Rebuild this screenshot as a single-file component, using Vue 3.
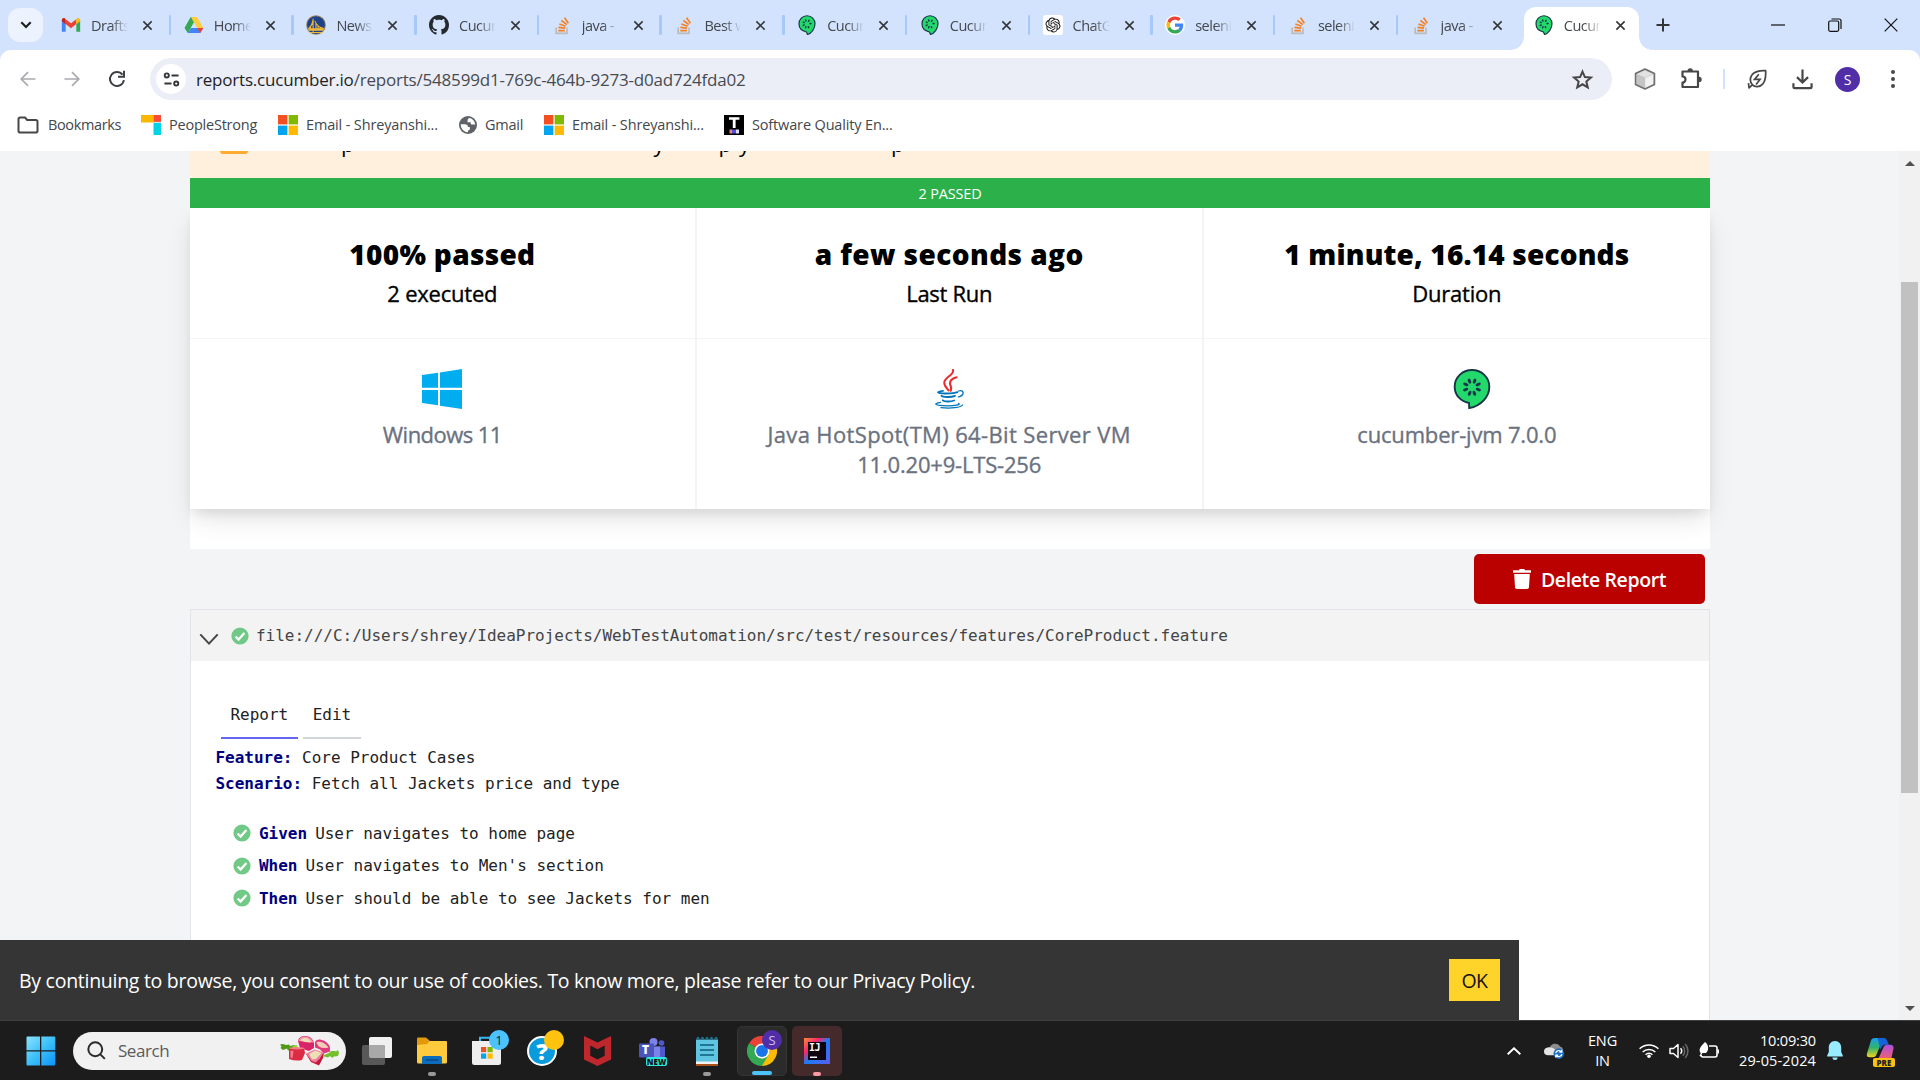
<script setup>
import { h } from 'vue'

const seeds = (cx, cy, r, rx, ry, angles) =>
  angles
    .map((a) => `<ellipse cx="${cx}" cy="${cy - r}" rx="${rx}" ry="${ry}" transform="rotate(${a} ${cx} ${cy})"/>`)
    .join('')

const glyphs = {
  gmail: ['0 0 24 24', '<path fill="#4285f4" d="M1 20h4.6V10.5L1 6.5V19z"/><path fill="#34a853" d="M18.4 20H23V6.5l-4.6 4z"/><path fill="#ea4335" d="M5.6 10.8V5l6.4 5 6.4-5v5.800L12 15.800z"/><path fill="#c5221f" d="M1 6v1.500l4.600 3.500V5L4.500 4C3 3 1 4 1 6z"/><path fill="#fbbc04" d="M18.400 5v6L23 7.500V6c0-2-2-3-3.500-2z"/>'],
  drive: ['0 0 24 24', '<path fill="#0f9d58" d="M8.300 2.500h4L5 21 .8 15.500z"/><path fill="#34a853" d="M8.300 2.500h7.400L4.600 21.500.8 15.500z"/><path fill="#ffcd40" d="M8.300 2.500h7.400l7.500 13h-7.500z"/><path fill="#4285f4" d="M8.400 15.500h14.800l-3.800 6H4.600z"/><path fill="#d3e3fd" d="M12 9.200l3.400 6.300H8.500z"/><path fill="#ea4335" d="M15.700 15.500h7.500l-3.800 6z"/>'],
  warriors: ['0 0 24 24', '<circle cx="12" cy="12" r="11.800" fill="#8f7f5a"/><circle cx="12" cy="12" r="10.600" fill="#1d428a"/><path fill="#f0b93a" d="M2 16h20l-1.500 3h-17z"/><path fill="none" stroke="#f0b93a" stroke-width="1.300" d="M4.500 21h15M8.500 4.500V20M10.500 7c2 5 5 8 10.500 9M8 7c-.500 4-2 7-5 9M12 10v7M14.500 13V17M17 15v2M5.500 13v4"/>'],
  github: ['0 0 16 16', '<path fill="#24292f" d="M8 0C3.580 0 0 3.580 0 8c0 3.540 2.290 6.530 5.470 7.590.4.070.550-.170.550-.380 0-.190-.010-.820-.010-1.490-2.010.370-2.530-.490-2.690-.940-.090-.230-.480-.940-.820-1.130-.280-.150-.680-.520-.010-.530.630-.010 1.080.580 1.230.820.720 1.210 1.870.870 2.330.660.070-.520.280-.870.510-1.070-1.780-.2-3.640-.890-3.640-3.950 0-.870.310-1.590.820-2.150-.080-.2-.360-1.020.080-2.120 0 0 .670-.210 2.200.820.640-.180 1.320-.270 2-.270s1.360.090 2 .270c1.530-1.040 2.200-.820 2.200-.820.440 1.100.160 1.920.080 2.120.510.560.820 1.270.820 2.150 0 3.070-1.870 3.750-3.650 3.950.290.250.540.730.540 1.480 0 1.070-.010 1.930-.010 2.200 0 .210.150.460.550.380A8.010 8.010 0 0 0 16 8c0-4.420-3.580-8-8-8z"/>'],
  so: ['0 0 24 24', '<path fill="none" stroke="#bcbbbb" stroke-width="2" d="M5 15v7h13v-7"/><path fill="none" stroke="#f48024" stroke-width="2" d="M7.500 18.700h8M7.700 14.800l8 1M8.800 10.700l7.500 2.700M11.300 6.600l6.500 4.900M15 3.200l4.700 6.800"/>'],
  cuke: ['0 0 24 24', '<path fill="#23d96c" stroke="#173647" stroke-width="1.100" d="M12 .6c5.500 0 9.900 4.400 9.900 10 0 6-4.700 11.500-11.500 12.800l-.1-3C5.600 19.500 2.100 15.700 2.100 10.600 2.100 5 6.500.6 12 .6z"/><g fill="#173647">' + seeds(12, 10.9, 3.9, 0.9, 1.6, [-160, -200, -22, 22, -65, 65, -112, 112]) + '</g>'],
  cukeTab: ['0 0 24 24', '<path fill="#23d96c" stroke="#173647" stroke-width="1.400" d="M12 .9c5.500 0 9.600 4.300 9.600 9.700 0 6-4.400 11.300-9 12.800l-1.200-3C5.800 19.300 2.400 15.500 2.400 10.600 2.400 5.200 6.500.9 12 .9z"/><g fill="#173647">' + seeds(12, 10.7, 4.3, 0.95, 1.5, [-160, -205, -20, 30, -65, -112, 85]) + '</g>'],
  openai: ['-4 -4 32 32', '<rect x="-4" y="-4" width="32" height="32" rx="5" fill="#fff"/><path fill="#111" d="M22.2819 9.8211a5.9847 5.9847 0 0 0-.5157-4.9108 6.0462 6.0462 0 0 0-6.5098-2.9A6.0651 6.0651 0 0 0 4.9807 4.1818a5.9847 5.9847 0 0 0-3.9977 2.9 6.0462 6.0462 0 0 0 .7427 7.0966 5.98 5.98 0 0 0 .511 4.9107 6.051 6.051 0 0 0 6.5146 2.9001A5.9847 5.9847 0 0 0 13.2599 24a6.0557 6.0557 0 0 0 5.7718-4.2058 5.9894 5.9894 0 0 0 3.9977-2.9001 6.0557 6.0557 0 0 0-.7475-7.0729zm-9.022 12.6081a4.4755 4.4755 0 0 1-2.8764-1.0408l.1419-.0804 4.7783-2.7582a.7948.7948 0 0 0 .3927-.6813v-6.7369l2.02 1.1686a.071.071 0 0 1 .038.052v5.5826a4.504 4.504 0 0 1-4.4945 4.4944zm-9.6607-4.1254a4.4708 4.4708 0 0 1-.5346-3.0137l.142.0852 4.783 2.7582a.7712.7712 0 0 0 .7806 0l5.8428-3.3685v2.3324a.0804.0804 0 0 1-.0332.0615L9.74 19.9502a4.4992 4.4992 0 0 1-6.1408-1.6464zM2.3408 7.8956a4.485 4.485 0 0 1 2.3655-1.9728V11.6a.7664.7664 0 0 0 .3879.6765l5.8144 3.3543-2.0201 1.1685a.0757.0757 0 0 1-.071 0l-4.8303-2.7865A4.504 4.504 0 0 1 2.3408 7.872zm16.5963 3.8558L13.1038 8.364 15.1192 7.2a.0757.0757 0 0 1 .071 0l4.8303 2.7913a4.4944 4.4944 0 0 1-.6765 8.1042v-5.6772a.79.79 0 0 0-.407-.667zm2.0107-3.0231l-.142-.0852-4.7735-2.7818a.7759.7759 0 0 0-.7854 0L9.409 9.2297V6.8974a.0662.0662 0 0 1 .0284-.0615l4.8303-2.7866a4.4992 4.4992 0 0 1 6.6802 4.66zM8.3065 12.863l-2.02-1.1638a.0804.0804 0 0 1-.038-.0567V6.0742a4.4992 4.4992 0 0 1 7.3757-3.4537l-.142.0805L8.704 5.459a.7948.7948 0 0 0-.3927.6813zm1.0976-2.3654l2.602-1.4998 2.6069 1.4998v2.9994l-2.5974 1.4997-2.6067-1.4997Z"/>'],
  google: ['-4 -4 56 56', '<circle cx="24" cy="24" r="28" fill="#fff"/><path fill="#ea4335" d="M24 9.500c3.540 0 6.710 1.220 9.210 3.600l6.850-6.850C35.900 2.380 30.470 0 24 0 14.620 0 6.510 5.380 2.560 13.220l7.980 6.190C12.430 13.720 17.740 9.500 24 9.500z"/><path fill="#4285f4" d="M46.980 24.550c0-1.570-.150-3.090-.380-4.550H24v9.020h12.940c-.580 2.960-2.260 5.480-4.780 7.180l7.730 6c4.510-4.180 7.090-10.360 7.090-17.650z"/><path fill="#fbbc05" d="M10.530 28.590c-.480-1.450-.760-2.990-.760-4.590s.270-3.140.760-4.590l-7.980-6.190C.920 16.460 0 20.120 0 24c0 3.880.920 7.540 2.560 10.780l7.970-6.190z"/><path fill="#34a853" d="M24 48c6.480 0 11.930-2.130 15.890-5.810l-7.730-6c-2.150 1.450-4.920 2.300-8.160 2.300-6.260 0-11.570-4.220-13.470-9.910l-7.980 6.190C6.510 42.620 14.620 48 24 48z"/>'],
  close: ['0 0 12 12', '<path fill="none" stroke="#333639" stroke-width="1.700" d="M1.500 1.500l9 9M10.500 1.500l-9 9"/>'],
  folder: ['0 0 22 18', '<path fill="none" stroke="#474747" stroke-width="2" stroke-linejoin="round" d="M1.500 14.700V3.300C1.500 2.200 2 1.500 3.200 1.500H8l2.200 2.500h8.600c1.200 0 1.700.700 1.700 1.700v9c0 1-.500 1.800-1.700 1.800H3.200c-1.200 0-1.700-.700-1.700-1.800z"/>'],
  ps: ['0 0 20 20', '<path fill="#fbb800" d="M0 0h12.500v7.500H0z"/><path fill="#fb4b35" d="M12.500 0H20v7.500h-7.500z"/><path fill="#00d3e6" d="M12.500 7.500H20V20h-7.500z"/><path fill="#fff" opacity=".6" d="M12.500 6.800H20v1.200h-7.500z"/>'],
  ms: ['0 0 20 20', '<path fill="#f25022" d="M0 0h9.400v9.400H0z"/><path fill="#7fba00" d="M10.600 0H20v9.400h-9.400z"/><path fill="#00a4ef" d="M0 10.600h9.400V20H0z"/><path fill="#ffb900" d="M10.600 10.600H20V20h-9.400z"/>'],
  globe: ['0 0 20 20', '<circle cx="10" cy="10" r="10" fill="#5f6368"/><path fill="#fff" d="M11.500 2.300c3.500.700 6.300 3.700 6.500 7.200h-3.500c-1 0-1.500-.500-1.500-1.500V7H9.500V5c0-1.200.700-2 2-2.700zM2 9.200h4.500c2 0 3.500 1 3.500 3h2v2.300c0 1.200-.800 1.500-2 1.500v2C5.500 18.200 1.700 14 2 9.200z"/>'],
  tic: ['0 0 20 20', '<path fill="#000" d="M0 0h20v20H0z"/><path fill="#fff" d="M5 2.200h10.400v2.600h-3.800V13H8.800V4.800H5z"/><path fill="#d98d7d" d="M5.500 14.500h2.500v4H5.500z"/><path fill="#5a4bd8" d="M8 14.500h4v4H8z"/><path fill="#dcdcff" d="M12 14.500h3v4h-3z"/>'],
  back: ['0 0 16 16', '<path fill="none" stroke="#a9abae" stroke-width="1.700" d="M15.500 8H1.500M8 1.200L1.200 8 8 14.800"/>'],
  forward: ['0 0 16 16', '<path fill="none" stroke="#a9abae" stroke-width="1.700" d="M.5 8h14M8 1.200L14.800 8 8 14.800"/>'],
  reload: ['0 0 18 18', '<path fill="none" stroke="#3c4043" stroke-width="2" d="M15.900 10.200A7 7 0 1 1 14.500 4.700"/><path fill="none" stroke="#3c4043" stroke-width="2" d="M16 .8v6h-6"/>'],
  tune: ['0 0 18 16', '<g fill="none" stroke="#33363a" stroke-width="2"><circle cx="4" cy="3.700" r="2.200"/><path d="M9 3.700h7.500M1.500 12.300H9"/><circle cx="14" cy="12.300" r="2.200"/></g>'],
  star: ['0 0 24 24', '<path fill="none" stroke="#474747" stroke-width="2.100" d="M12 3.700l2.500 5.800 6.300.5-4.800 4.100 1.500 6.200-5.500-3.300-5.500 3.300L8 14.100 3.200 10l6.300-.5z"/>'],
  box: ['0 0 22 22', '<path fill="#c4c4c4" stroke="#6f6f6f" stroke-width="1.500" stroke-linejoin="round" d="M11 1l9.500 4.500v11L11 21l-9.500-4.500v-11z"/><path fill="#e2e2e2" d="M11 2.500l7.800 3.600L11 9.500 3.200 6.100z"/><path fill="#f1f1f1" d="M11.200 10l7.800-3.500v9.400l-7.800 3.800z"/>'],
  puzzle: ['0 0 24 24', '<path fill="none" stroke="#474747" stroke-width="2.200" stroke-linejoin="round" d="M3.500 4.500h15.500v15.500H3.500v-4.500a3 3 0 0 0 0-6z"/><path fill="#474747" d="M8.500 4a2.700 2.700 0 0 1 5.400 0zM20 9.700a2.700 2.700 0 0 1 0 5.400z"/>'],
  leaf: ['0 0 22 22', '<g fill="none" stroke="#474747" stroke-width="1.900"><path stroke-linejoin="round" d="M20.500 1.800c.300 6-.1 11-3 14.500-3.500 4-9 3.800-11.500 1.200-3-3-3.200-8-.2-11.500C9 2.500 14.500 1.500 20.500 1.800zM6.200 17.300L2.300 20.800 1.600 15.500"/><path d="M13 5.800L8.300 11.500h6L10 17"/></g>'],
  download: ['0 0 22 22', '<path fill="none" stroke="#474747" stroke-width="2.300" d="M11 .5v13M5.200 8.500l5.800 5.700 5.800-5.700M1.500 15v3.500c0 1 .5 1.500 1.500 1.500h16c1 0 1.500-.5 1.500-1.500V15"/>'],
  dots: ['0 0 4 18', '<g fill="#474747"><circle cx="2" cy="2" r="2"/><circle cx="2" cy="9" r="2"/><circle cx="2" cy="16" r="2"/></g>'],
  win10: ['0 0 40 40', '<path fill="#00adef" d="M0 6l16-2.300v15.100H0zM18 3.400L40 0v18.800H18zM0 21h16v15.200L0 34zM18 21h22v19l-22-3.200z"/>'],
  java: ['0 0 30 40', '<g fill="none" stroke-linecap="round"><path stroke="#ea2d2e" stroke-width="2" d="M19 .8c1.600 5-8 7.200-8.700 12.400-.4 3.200 2.600 6 4.200 8.300"/><path stroke="#ea2d2e" stroke-width="2.200" d="M22.500 8.300c-4 1.200-6.700 3.300-6.500 6.200.2 2.200 2.200 3.700.8 7.200"/><g stroke="#0074bd" stroke-width="1.300"><path d="M9 21.800c-3 .4-5 1-5 1.600 1.500 1.700 15 1.300 19.500-.3M7.500 26.700c1 1.700 10 1.700 13.500.2M8.800 31.300c1.500 1.500 8 1.600 11.300.2" stroke-width="1.800"/><path d="M24.500 22c3.500-1 5 .500 4.500 2.500-.4 1.800-2.500 3-4.600 3.400M6.500 33.300c-8 1.500-6 3.300 7 3.500 6.500.1 14-1 11-2.300M28.500 36c-1.500 2.500-12 3.800-21.500 2.600"/></g></g>'],
  trash: ['0 0 18 20', '<path fill="#fff" d="M0 1.300h6L6.700 0h4.600l.7 1.300h6v2.500H0zM1.200 5h15.600l-.8 13.300c0 1-.9 1.700-2 1.700H4c-1.100 0-2-.7-2-1.700z"/>'],
  chev: ['0 0 20 14', '<path fill="none" stroke="#474747" stroke-width="2" d="M1.300 1.500L10 11.500l8.700-10"/>'],
  check: ['0 0 18 18', '<circle cx="9" cy="9" r="8.600" fill="#70c986"/><path fill="none" stroke="#fff" stroke-width="2.300" d="M4.600 9.500l3 3 5.800-6.500"/>'],
  win11: ['0 0 30 30', '<defs><linearGradient id="w11" x1="0" y1="0" x2="1" y2="1"><stop offset="0" stop-color="#8be2fd"/><stop offset=".5" stop-color="#3cc0f9"/><stop offset="1" stop-color="#0a93fa"/></linearGradient></defs><path fill="url(#w11)" d="M1.500.5H14v13.800H.5V1.500q0-1 1-1zM15.300.5h13q1 0 1 1v12.800h-14zM.5 15.600H14v13.900H1.500q-1 0-1-1zM15.300 15.600h14v12.900q0 1-1 1h-13z"/>'],
  glass: ['0 0 20 20', '<g fill="none" stroke="#2b2b2b" stroke-width="2.100"><circle cx="8.700" cy="8.700" r="7.300"/><path d="M13.800 13.800l5 5"/></g>'],
  rhubarb: ['0 0 60 30', '<path fill="#4f9a14" d="M0 8.500l3-.5 3 1 3-.5 1 1.500 4-1 3 2-2 4-5-1-2 .5-1-2-4 1.500-2.500-2 1-1.500z"/><path fill="#8fd63a" d="M12 10l5-1 1 5-4-1z"/><path fill="#74bf2b" d="M44 19l5-2 2-2h4l1 .500 2-1.500 1 3-1 3-4 .500-2 1.500-2-2-2 1.500-4-1z"/><path fill="#d9246a" d="M18 5Q19 0 25 0q7 0 9 7v5l-5 3-9-3z"/><path fill="#f29ab0" d="M18.500 5Q20 .500 25 .600q6 .400 8.500 6z"/><path fill="#ece0b4" d="M20.500 4.500q2-3 5-2.500 4 .500 5.500 4.500-5 .500-10.500-2z"/><path fill="#e03a7c" d="M35 6q1-3 5-2.500 8 1.500 10 8v4l-6 2-4-4-5-2z"/><path fill="#f2cdb8" d="M36.500 6q7-1.500 12 5.500-6 1.500-9.500-1-2.500-2-2.500-4.500z"/><path fill="#dc2b45" d="M9 12q7 2 15 0l1 5-3 7q-6 1.500-13-1z"/><path fill="#f57f88" d="M9 12.500q0-1.500 7-1.500t9 1.500q-8 2-16 0zM10.500 14.500l3 .500-1 7-2-.500z"/><path fill="#c41836" d="M26 18l5 8 8 3.500L43 22l1-5-9 3z"/><path fill="#f07ca0" d="M26 17.500l9-4 8.500 3-4 6.500-4 3.500-4-1.500z"/><path fill="#ece0b4" d="M29 18l6.500-3.500 6 2.500-5.500 6-4 .500z"/>'],
  taskview: ['0 0 30 28', '<rect x="7" y="0" width="23" height="21" rx="2" fill="#f0f0f0"/><rect x="0" y="8" width="23" height="20" rx="2" fill="#5c5c5c" fill-opacity=".95"/><path fill="#a9a9a9" d="M7 8h14a2 2 0 0 1 2 2v11H9a2 2 0 0 1-2-2z"/>'],
  explorer: ['0 0 30 28', '<path fill="#e29a08" d="M0 1.500Q0 .5 1 .5h8L13 4v5H0z"/><path fill="#ffcb3d" d="M0 8l10-1 3-3h16q1 0 1 1v20q0 1.500-1.500 1.500h-27Q0 26.500 0 25z"/><path fill="#0d6dbd" d="M5 27v-6q0-2 2-2h16q2 0 2 2v6z"/><path stroke="#0a3d78" stroke-width="1.200" d="M8.500 23h13"/>'],
  store: ['0 0 30 30', '<path fill="none" stroke="#38b6f1" stroke-width="2" d="M8 6V1.800h13V6"/><path fill="#eee" d="M0 5h29v21.500q0 2.500-2.500 2.500h-24Q0 29 0 26.500z"/><path fill="#f25022" d="M9 11h5.200v5.200H9z"/><path fill="#7fba00" d="M15.500 11h5.200v5.200h-5.200z"/><path fill="#00a4ef" d="M9 17.500h5.200v5.200H9z"/><path fill="#ffb900" d="M15.500 17.500h5.200v5.200h-5.200z"/>'],
  mcafee: ['0 0 27 30', '<path fill="#c0272d" d="M0 0l13.500 6.500L27 0v23.500L13.500 30 0 23.500z"/><path fill="#1c1c1c" d="M6.300 9.500l7.200 3.700 7.200-3.700v10.200l-7.200 3.700-7.200-3.700z"/>'],
  teams: ['0 0 28 22', '<circle cx="14.500" cy="4" r="4" fill="#7b83eb"/><circle cx="22.500" cy="5" r="2.800" fill="#5059c9"/><path fill="#5059c9" d="M17 8.500h9v9q0 3-4 3h-5z"/><path fill="#7b83eb" d="M9 8.500h12V20H9z"/><rect y="5.500" width="15" height="14" rx="1" fill="#4b53bc"/>'],
  notepad: ['0 0 22 30', '<path fill="#a9521c" d="M0 25h22v5H0z"/><path fill="#f3f3f3" d="M0 24h22v4H0z"/><path fill="#5fc5e0" d="M0 3.500h22v22H0z"/><g fill="#1b6f8c"><circle cx="2" cy="2.200" r="1.500"/><circle cx="6.500" cy="2.200" r="1.500"/><circle cx="11" cy="2.200" r="1.500"/><circle cx="15.500" cy="2.200" r="1.500"/><circle cx="20" cy="2.200" r="1.500"/></g><path stroke="#0d5e7a" stroke-width="1.700" d="M4 9h14M4 14h14M4 19h14"/>'],
  chrome: ['0 0 48 48', '<path fill="#ea4335" d="M24 24L3.200 12A24 24 0 0 1 44.800 12z"/><path fill="#fbbc04" d="M24 24l20.800-12A24 24 0 0 1 24 48z"/><path fill="#34a853" d="M24 24v24A24 24 0 0 1 3.200 12z"/><path fill="#ea4335" d="M24 12h20.800L34.400 30z"/><path fill="#fbbc04" d="M34.400 30L24 48V24L44.800 12.100z"/><path fill="#34a853" d="M13.600 30L3.200 12 24 36l10.400-6L24 48z"/><circle cx="24" cy="24" r="12" fill="#fff"/><circle cx="24" cy="24" r="9.500" fill="#1a73e8"/>'],
  intellij: ['0 0 26 26', '<defs><linearGradient id="ij" x1="0" y1="0" x2="1" y2="1"><stop offset="0" stop-color="#fd8a3c"/><stop offset=".3" stop-color="#f8256c"/><stop offset=".5" stop-color="#1a7cf5"/><stop offset="1" stop-color="#5a5cf0"/></linearGradient></defs><rect width="26" height="26" fill="url(#ij)"/><rect x="4" y="4" width="18" height="18" fill="#0d0410"/><path fill="#fff" d="M6 18.500h7V20H6z"/>'],
  up: ['0 0 14 8', '<path fill="none" stroke="#fff" stroke-width="1.900" d="M.7 7.300L7 1.300l6.300 6"/>'],
  cloud: ['0 0 22 18', '<path fill="#8c8c8c" d="M6 6a6 6 0 0 1 11-1q3 0 3 5l-9 3z"/><path fill="#e4e4e4" d="M4.500 14Q0 14 0 10t5-4.500q6 0 7 4l2 4.500z"/><circle cx="15.500" cy="12.300" r="5.600" fill="#1d6fc2"/><path fill="none" stroke="#fff" stroke-width="1.300" d="M12.300 11.800a3.300 3.300 0 0 1 6-1.300M18.700 12.800a3.300 3.300 0 0 1-6 1.300M18.600 8.300v2.500h-2.400M12.400 16.300v-2.500h2.400"/>'],
  wifi: ['0 0 20 15', '<g fill="none" stroke="#fff" stroke-width="1.500"><path d="M.6 5.800a13.300 13.300 0 0 1 18.800 0M3.700 9a8.900 8.900 0 0 1 12.600 0M6.600 11.700a4.800 4.800 0 0 1 6.800 0"/></g><circle cx="10" cy="13.200" r="1.800" fill="#fff"/>'],
  volume: ['0 0 20 18', '<g fill="none" stroke-width="1.500"><path stroke="#fff" stroke-linejoin="round" d="M1 6.500h3.500L9 2.500v13l-4.500-4H1z"/><path stroke="#fff" d="M11.500 6.300a4 4 0 0 1 0 5.400"/><path stroke="#666" d="M13.800 4.200a7 7 0 0 1 0 9.600M16.200 2a10.300 10.300 0 0 1 0 14"/></g>'],
  battery: ['0 0 20 17', '<path fill="none" stroke="#fff" stroke-width="1.600" d="M10 4h6q2 0 2 2v7q0 2-2 2H4q-2 0-2-2"/><path fill="#fff" d="M18.500 7.500H20v4h-1.500zM6 0c4 3 4 8 1 11H1.500C-1 7 2 4 6 0z"/><path stroke="#fff" stroke-width="1.300" d="M4.500 8L1 14"/>'],
  bell: ['0 0 16 19', '<path fill="#99ebff" d="M8 0c4 0 6.200 3 6.200 6.500V11l1.600 3.600v.9H.2v-.9L1.800 11V6.500C1.800 3 4 0 8 0zM5.300 16.500h5.400Q10.500 19 8 19t-2.700-2.500z"/>'],
  copilot: ['0 0 30 26', '<defs><linearGradient id="c1" x1="0" y1="0" x2="0" y2="1"><stop offset="0" stop-color="#1a9df0"/><stop offset=".5" stop-color="#2fb36b"/><stop offset="1" stop-color="#f5d21b"/></linearGradient><linearGradient id="c2" x1="0" y1="0" x2="0" y2="1"><stop offset="0" stop-color="#a84fe0"/><stop offset="1" stop-color="#f2626e"/></linearGradient></defs><path fill="url(#c1)" d="M5 3q1-3 4-3h9l-7 17q-1 3-4 3H4q-4 0-3-4z"/><path fill="#1464d8" d="M12 0h7q2 0 3 3l1.500 4H19q-2 0-3 3l-1 2z"/><path fill="url(#c2)" d="M18 10q1-3 4-3h3q4 0 3.500 4L26 22H10q3 0 4-3z"/>'],
  minimise: ['0 0 14 14', '<path stroke="#111" stroke-width="1.200" d="M0 7h14"/>'],
  restore: ['0 0 14 14', '<g fill="none" stroke="#111" stroke-width="1.200"><rect x=".7" y="3" width="10" height="10.300" rx="1.500"/><path d="M3.500 1h7.500q2 0 2 2v8"/></g>'],
  closeWin: ['0 0 14 14', '<path stroke="#111" stroke-width="1.200" d="M.7.7l12.600 12.600M13.300.7L.7 13.300"/>'],
  plus: ['0 0 14 14', '<path stroke="#333639" stroke-width="2" d="M7 .5v13M.5 7h13"/>'],
  down: ['0 0 12 8', '<path fill="none" stroke="#1f1f1f" stroke-width="2.200" d="M1.300 1.300L6 6l4.700-4.700"/>'],
}

const Glyph = (p) =>
  h('svg', { class: 'glyph', viewBox: glyphs[p.n][0], width: p.w, height: p.h ?? p.w, preserveAspectRatio: 'none', innerHTML: glyphs[p.n][1] })
Glyph.props = ['n', 'w', 'h']

const tabs = [
  ['gmail', 'Drafts'], ['drive', 'Home -'], ['warriors', 'News |'], ['github', 'Cucum'], ['so', 'java - H'], ['so', 'Best w'],
  ['cukeTab', 'Cucum'], ['cukeTab', 'Cucum'], ['openai', 'ChatG'], ['google', 'seleni'], ['so', 'seleni'], ['so', 'java - H'], ['cukeTab', 'Cucum'],
]
const marks = [
  ['folder', 22, 18, 'Bookmarks', 'm0'], ['ps', 20, 20, 'PeopleStrong', 'm1'], ['ms', 20, 20, 'Email - Shreyanshi...', 'm2'],
  ['globe', 18, 18, 'Gmail', 'm3'], ['ms', 20, 20, 'Email - Shreyanshi...', 'm4'], ['tic', 20, 20, 'Software Quality En...', 'm5'],
]
const steps = [
  ['Given', 'User navigates to home page'],
  ['When', "User navigates to Men's section"],
  ['Then', 'User should be able to see Jackets for men'],
]
</script>

<template>
  <div class="screen">
    <header class="strip">
      <button class="tabsearch"><Glyph n="down" w="12" h="8" /></button>
      <div v-for="(t, i) in tabs" :key="i" class="tab" :class="{ active: i === 12, nosep: i >= 11 }">
        <Glyph :n="t[0]" w="20" />
        <span class="tabname">{{ t[1] }}</span>
        <Glyph n="close" w="11" />
      </div>
      <Glyph class="plus" n="plus" w="14" />
      <div class="winbtns">
        <Glyph n="minimise" w="14" /><Glyph n="restore" w="14" /><Glyph n="closeWin" w="14" />
      </div>
    </header>

    <div class="chrome">
      <div class="toolbar">
        <div class="nav"><Glyph n="back" w="16" /><Glyph n="forward" w="16" /><Glyph n="reload" w="18" /></div>
        <div class="omni">
          <i class="site"><Glyph n="tune" w="17" h="15" /></i>
          <span class="url"><b>reports.cucumber.io</b>/reports/548599d1-769c-464b-9273-d0ad724fda02</span>
          <Glyph n="star" w="23" />
        </div>
        <div class="ext">
          <Glyph n="box" w="22" /><Glyph n="puzzle" w="24" /><i class="vsep" /><Glyph n="leaf" w="20" /><Glyph n="download" w="21" />
          <i class="avatar">S</i><Glyph n="dots" w="4" h="18" />
        </div>
      </div>
      <div class="marks">
        <div v-for="m in marks" :key="m[4]" class="mark" :class="m[4]"><Glyph :n="m[0]" :w="m[1]" :h="m[2]" /><span>{{ m[3] }}</span></div>
      </div>
    </div>

    <div class="viewport">
      <main class="page">
        <section class="summary">
          <div class="banner">
            <i class="amber" />
            <div class="tails"><span>p</span><span>y</span><span>p</span><span>y</span><span>p</span></div>
          </div>
          <div class="passbar"><span class="pass">2 PASSED</span></div>
          <div class="card">
            <div class="cell"><strong><span class="h1">100% passed</span></strong><p><span class="s1">2 executed</span></p></div>
            <div class="cell"><strong><span class="h2">a few seconds ago</span></strong><p><span class="s2">Last Run</span></p></div>
            <div class="cell"><strong><span class="h3">1 minute, 16.14 seconds</span></strong><p><span class="s3">Duration</span></p></div>
            <div class="cell env"><Glyph n="win10" w="40" /><p><span class="g1">Windows 11</span></p></div>
            <div class="cell env"><Glyph n="java" w="30" h="40" /><p><span class="g2">Java HotSpot(TM) 64-Bit Server VM</span><br><span class="g22">11.0.20+9-LTS-256</span></p></div>
            <div class="cell env"><Glyph class="cukebig" n="cuke" w="42" h="40" /><p><span class="g3">cucumber-jvm 7.0.0</span></p></div>
          </div>
        </section>
        <div class="actions"><button class="del"><Glyph n="trash" w="18" h="20" /><span>Delete Report</span></button></div>
        <section class="feature">
          <div class="fhead"><Glyph class="chev" n="chev" w="20" h="13" /><Glyph n="check" w="18" /><span class="path">file:///C:/Users/shrey/IdeaProjects/WebTestAutomation/src/test/resources/features/CoreProduct.feature</span></div>
          <nav class="ftabs"><span class="on">Report</span><span>Edit</span></nav>
          <div class="gherkin"><div><b>Feature:</b> Core Product Cases</div><div><b>Scenario:</b> Fetch all Jackets price and type</div></div>
          <div class="steps"><div v-for="s in steps" :key="s[0]"><Glyph n="check" w="18" /><b>{{ s[0] }}</b>{{ s[1] }}</div></div>
        </section>
      </main>
      <aside class="scroll"><i class="arr up" /><i class="thumb" /><i class="arr dn" /></aside>
      <div class="cookie"><span class="ck">By continuing to browse, you consent to our use of cookies. To know more, please refer to our Privacy Policy.</span><button class="ok"><span>OK</span></button></div>
    </div>

    <footer class="taskbar">
      <div class="slot s-start"><Glyph n="win11" w="30" /></div>
      <div class="search"><Glyph n="glass" w="19" /><span>Search</span><Glyph n="rhubarb" w="60" h="30" /></div>
      <div class="slot"><Glyph n="taskview" w="30" h="28" /></div>
      <div class="slot run"><Glyph n="explorer" w="30" h="28" /></div>
      <div class="slot"><Glyph n="store" w="30" /><i class="badge blue">1</i></div>
      <div class="slot"><i class="help">?</i><i class="badge amberdot" /></div>
      <div class="slot"><Glyph n="mcafee" w="27" h="30" /></div>
      <div class="slot"><Glyph class="tm" n="teams" w="28" h="22" /><i class="tt">T</i><i class="new">NEW</i></div>
      <div class="slot run"><Glyph n="notepad" w="22" h="30" /></div>
      <div class="slot lit"><Glyph n="chrome" w="30" /><i class="badge violet">S</i></div>
      <div class="slot pink"><Glyph n="intellij" w="26" /><i class="ij">IJ</i></div>
      <div class="tray">
        <Glyph n="up" w="14" h="8" /><Glyph class="onedrive" n="cloud" w="21" h="17" />
        <div class="lang"><span class="eng">ENG</span><span>IN</span></div>
        <div class="quick"><Glyph n="wifi" w="20" h="15" /><Glyph n="volume" w="20" h="18" /><Glyph n="battery" w="20" h="17" /></div>
        <div class="clock"><span class="time">10:09:30</span><span class="date">29-05-2024</span></div>
        <Glyph n="bell" w="16" h="19" />
        <div class="cop"><Glyph n="copilot" w="29" h="25" /><i>PRE</i></div>
      </div>
    </footer>
  </div>
</template>

<style>
body { margin: 0; overflow: hidden; }
</style>

<style scoped>
* { box-sizing: border-box; }
i { font-style: normal; display: block; }
p { margin: 0; }
button { border: 0; padding: 0; font: inherit; }
.glyph { display: block; flex: none; }
.screen { width: 1920px; height: 1080px; display: flex; flex-direction: column; overflow: hidden; background: #d3e3fd; font-family: "Open Sans", "Noto Sans", sans-serif; }

.strip { height: 50px; flex: none; display: flex; align-items: center; padding-left: 8px; }
.tabsearch { width: 35px; height: 34px; border-radius: 12px; background: #edf3fe; display: flex; align-items: center; justify-content: center; margin-right: 4.500px; flex: none; }
.tab { width: 122.700px; height: 50px; flex: none; display: flex; align-items: center; padding-left: 13.500px; position: relative; }
.tab::after { content: ""; position: absolute; right: -1px; top: 15px; width: 2.500px; height: 20px; background: #a8c7fa; border-radius: 1px; }
.tab.nosep::after { display: none; }
.tabname { width: 37px; margin: 2px 14px 0 10px; overflow: hidden; white-space: nowrap; font-size: 14.500px; letter-spacing: -.5px; line-height: 22px; color: #44474c; -webkit-mask-image: linear-gradient(90deg, #000 55%, transparent); mask-image: linear-gradient(90deg, #000 55%, transparent); }
.tab.active { width: 115px; margin-left: 4px; padding-left: 10px; height: 43px; margin-top: 7px; padding-bottom: 7px; background: #fff; border-radius: 12px 12px 0 0; }
.tab.active::before { content: ""; position: absolute; left: -15px; right: -15px; bottom: 0; height: 13px; background: radial-gradient(circle at 2px 0, transparent 12.500px, #fff 13px) left / 15px 13px no-repeat, radial-gradient(circle at 13px 0, transparent 12.500px, #fff 13px) right / 15px 13px no-repeat; }
.plus { margin-left: 17px; }
.winbtns { margin-left: auto; display: flex; gap: 42.500px; padding-right: 22px; }

.chrome { height: 101px; flex: none; background: #fff; border-radius: 11px 11px 0 0; }
.toolbar { height: 58px; display: flex; align-items: center; }
.nav { width: 150px; display: flex; align-items: center; padding-left: 20px; gap: 28px; flex: none; }
.omni { width: 1462px; height: 42px; border-radius: 21px; background: #ebeef7; display: flex; align-items: center; padding: 0 18px 0 6px; flex: none; }
.site { width: 30px; height: 30px; border-radius: 50%; background: #fff; display: flex; align-items: center; justify-content: center; }
.url { margin-left: 10px; margin-right: auto; font-size: 17px; color: #474a4f; white-space: nowrap; letter-spacing: -.2px; }
.url b { font-weight: 400; color: #1f1f1f; }
.ext { display: flex; align-items: center; padding-left: 22px; }
.ext > :nth-child(2) { margin-left: 23px; }
.vsep { width: 2px; height: 20px; background: #d3e3fd; margin: 0 22px 0 20px; }
.ext > :nth-child(5) { margin-left: 25px; }
.avatar { width: 25px; height: 25px; border-radius: 50%; background: #512da8; color: #fff; font-size: 14px; line-height: 25px; text-align: center; margin: 0 31px 0 22px; }
.marks { height: 34px; display: flex; align-items: center; padding-left: 17px; font-size: 14.500px; color: #44474c; line-height: 20px; }
.mark { display: flex; align-items: center; gap: 8px; white-space: nowrap; flex: none; letter-spacing: -.15px; }
.m0 { gap: 9px; width: 124px; letter-spacing: -.37px; }
.m1 { width: 137px; letter-spacing: -.22px; }
.m2 { width: 181px; }
.m3 { width: 85px; letter-spacing: -.25px; }
.m4 { width: 180px; }

.viewport { height: 869px; flex: none; display: flex; background: #f3f4f6; position: relative; overflow: hidden; }
.page { width: 1520px; margin-left: 190px; flex: none; }
.summary { background: #fff; height: 398px; }
.banner { height: 27px; background: #fff0de; overflow: hidden; border-bottom-left-radius: 4px; }
.amber { width: 28px; height: 3px; margin-left: 30px; background: #ffaa33; border-radius: 0 0 4px 4px; }
.tails { display: flex; margin-top: -23px; font-size: 22px; line-height: 24px; padding-left: 151px; }
.tails :nth-child(2) { margin-left: 299px; }
.tails :nth-child(3) { margin-left: 54px; }
.tails :nth-child(4) { margin-left: 7px; }
.tails :nth-child(5) { margin-left: 141px; }
.passbar { height: 30px; background: #2cb14a; color: #fff; font-size: 14.500px; line-height: 31px; text-align: center; letter-spacing: -.18px; }
.card { height: 301px; display: grid; grid-template: 131px 170px / 506.700px 507px 1fr; box-shadow: 0 12px 25px -4px rgba(0,0,0,.13), 0 6px 10px -2px rgba(0,0,0,.07); background: #fff; text-align: center; }
.cell { border-right: 2px solid #f3f4f6; border-bottom: 1px solid #f3f4f6; padding-top: 27px; color: #000; }
.cell:nth-child(3n) { border-right: 0; }
.cell strong { display: block; font-weight: 800; font-size: 28px; line-height: 38px; }
.cell p { font-size: 22px; line-height: 30px; margin-top: 5px; -webkit-text-stroke: .35px currentColor; }
.h1 { letter-spacing: .3px; }
.h2 { letter-spacing: .42px; }
.h3 { letter-spacing: .16px; }
.s1 { letter-spacing: -.22px; }
.s2 { letter-spacing: -.29px; }
.s3 { letter-spacing: -.22px; }
.g1 { letter-spacing: -.55px; }
.g2 { letter-spacing: .36px; }
.g22 { letter-spacing: -.19px; }
.g3 { letter-spacing: -.18px; }
.cell.env { display: flex; flex-direction: column; align-items: center; padding-top: 30px; border-bottom: 0; color: #6b7280; }
.cell.env p { margin-top: 10px; }
.cukebig { margin-left: 31px; }
.actions { height: 60px; display: flex; justify-content: flex-end; padding: 5px 5px 0 0; }
.del { width: 231px; height: 50px; border-radius: 5px; background: #bb0000; color: #fff; font-size: 19.500px; font-weight: 600; letter-spacing: -.38px; display: flex; align-items: center; justify-content: center; gap: 10px; white-space: nowrap; }
.feature { border: 1px solid #e1e3e6; background: #fff; height: 500px; font-family: "DejaVu Sans Mono", monospace; font-size: 16px; color: #222; letter-spacing: -.01px; }
.fhead { height: 51px; background: #f3f3f3; display: flex; align-items: center; padding: 0 0 0 8px; color: #444; white-space: nowrap; }
.chev { margin: 8px 12px 0 0; }
.path { margin-left: 7px; }
.ftabs { display: flex; gap: 5px; margin: 29px 0 0 30px; }
.ftabs span { padding: 0 10px 0 9.500px; height: 49px; line-height: 50px; border-bottom: 2px solid #d1d5db; }
.ftabs .on { border-color: #6366f1; }
.gherkin { padding-left: 24.500px; line-height: 26px; margin-top: 6px; }
b { color: #000080; }
.url b { color: #1f1f1f; }
.steps { margin: 20px 0 0 42px; }
.steps div { height: 32.500px; display: flex; align-items: center; }
.steps b { margin: 0 8px; }
.scroll { width: 21px; margin-left: auto; background: #f1f1f1; display: flex; flex-direction: column; align-items: center; }
.thumb { width: 17px; height: 511px; background: #c1c1c1; margin-top: 116px; }
.arr { border: 5px solid transparent; width: 0; height: 0; }
.arr.up { border-bottom-color: #505050; border-top: 0; margin-top: 10px; }
.arr.dn { border-top-color: #505050; border-bottom: 0; margin-top: auto; margin-bottom: 9px; }
.cookie { position: absolute; left: 0; bottom: 0; width: 1519px; height: 80px; background: #353535; color: #fff; display: flex; align-items: center; justify-content: space-between; padding: 0 19px; font-size: 19.500px; letter-spacing: -.275px; white-space: nowrap; }
.ok { width: 51px; height: 42px; background: #ffd42a; color: #111; font-size: 19.500px; letter-spacing: -.5px; }

.taskbar { height: 60px; flex: none; background: #1c1c1c; border-top: 1px solid #404040; display: flex; align-items: center; color: #fff; }
.slot { width: 50px; height: 50px; margin-right: 5px; border-radius: 5px; display: flex; align-items: center; justify-content: center; position: relative; flex: none; }
.s-start { margin: 0 7px 0 16px; }
.run::after, .lit::after, .pink::after { content: ""; position: absolute; bottom: 0; left: 21px; width: 8px; height: 4px; border-radius: 2px; background: #9a9a9a; }
.lit { background: #2b2b2b; border: 1px solid #353535; }
.lit::after { left: 14px; width: 20px; background: #4cc2ff; }
.pink { background: #452a2c; }
.pink::after { background: #ff99a4; }
.search { width: 273px; height: 38px; border-radius: 19px; background: #f1f1f1; color: #5b5b5b; display: flex; align-items: center; padding: 0 6px 0 14px; margin-right: 6px; font-size: 17px; letter-spacing: -.45px; flex: none; }
.search span { margin: 0 auto 0 12px; }
.badge { position: absolute; width: 20px; height: 20px; border-radius: 50%; right: 3px; top: 4px; font-size: 13px; line-height: 20px; text-align: center; }
.lit .badge { right: 4px; top: 3px; }
.blue { background: #4cc2ff; color: #1c1c1c; }
.amberdot { background: #ffc20e; }
.violet { background: #512da8; color: #cfc3ec; }
.help { width: 30px; height: 30px; border-radius: 50%; background: #0a9bdc; border: 2px solid #fff; font-weight: 800; font-size: 23px; line-height: 26px; text-align: center; }
.tm { margin-top: -4px; margin-left: 2px; }
.tt { position: absolute; left: 15px; top: 17px; font-size: 12px; line-height: 14px; font-weight: 800; }
.new { position: absolute; left: 19px; top: 31px; width: 21px; height: 9px; background: #2ce6e0; color: #111; border-radius: 2px; font-size: 8px; font-weight: 800; line-height: 9px; text-align: center; }
.ij { position: absolute; left: 17px; top: 16px; font: 700 10px/12px "DejaVu Sans Mono", monospace; letter-spacing: -.5px; }
.tray { margin-left: auto; display: flex; align-items: center; font-size: 14.500px; line-height: 20px; flex: none; padding-right: 25px; }
.onedrive { margin: 0 23px 0 23px; }
.lang, .clock { display: flex; flex-direction: column; align-items: center; }
.lang { margin-right: 22px; letter-spacing: -.15px; }
.quick { display: flex; align-items: center; gap: 10px; }
.clock { align-items: flex-end; margin: 0 11px 0 20px; }
.time { letter-spacing: -.17px; }
.date { letter-spacing: .13px; }
.cop { position: relative; margin-left: 23px; }
.cop i { position: absolute; left: 7px; bottom: -4px; width: 22px; height: 9px; border-radius: 2px; background: #ffc20e; color: #222; font-size: 8px; font-weight: 800; line-height: 9px; text-align: center; }
</style>
